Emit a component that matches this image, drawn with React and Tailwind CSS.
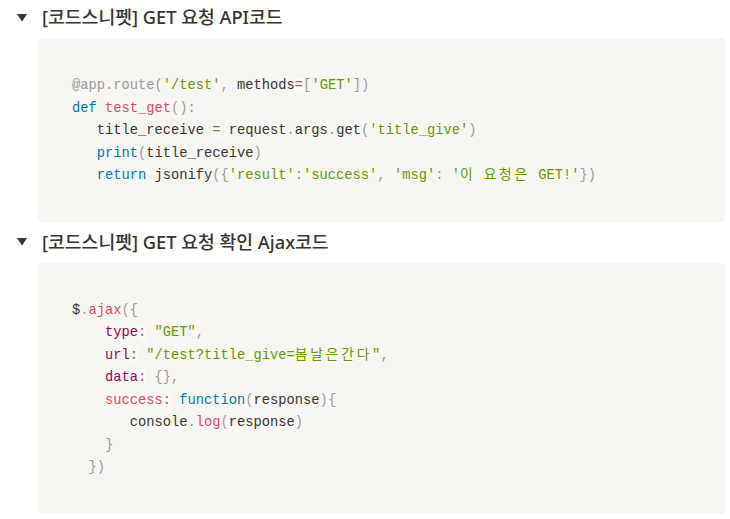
import React from "react";

const C = {
  p: "text-[#999]",
  s: "text-[#669900]",
  k: "text-[#0077aa]",
  f: "text-[#DD4A68]",
  o: "text-[#9a6e3a] bg-[rgba(255,255,255,0.5)]",
  pr: "text-[#990055]",
  d: "text-[#37352f]",
};

function T({ t, children }) {
  return <span className={C[t]}>{children}</span>;
}
function K({ children }) {
  return <span className="tracking-[2.8px]">{children}</span>;
}

function Toggle({ title }) {
  return (
    <div className="flex h-[34px] items-center pl-[17px]">
      <svg width="10" height="9" viewBox="0 0 10 9" className="shrink-0">
        <polygon points="0,1 10,1 5,8.5" fill="#37352f" />
      </svg>
      <span
        className="ml-[15px] text-[18.25px] font-medium text-[#37352f]"
        style={{ fontFamily: '"Noto Sans", "Noto Sans CJK KR", sans-serif' }}
      >
        {title}
      </span>
    </div>
  );
}

function Code({ children }) {
  return (
    <div className="ml-[38px] mr-[5px] mt-[4px] rounded-[4px] bg-[#F7F6F3] pl-[34px] pt-[37px] pb-[34px]">
      <pre
        className="m-0 whitespace-pre text-[13.75px] leading-[22.5px] text-[#37352f]"
        style={{ fontFamily: '"Liberation Mono", "Noto Sans CJK KR", monospace' }}
      >
        {children}
      </pre>
    </div>
  );
}

export default function App() {
  return (
    <div className="w-[730px] h-[519px] bg-white overflow-hidden">
      <Toggle title="[코드스니펫] GET 요청 API코드" />
      <Code>
        <T t="p">@app</T><T t="p">.route</T><T t="p">(</T><T t="s">'/test'</T><T t="p">,</T> methods<T t="o">=</T><T t="p">[</T><T t="s">'GET'</T><T t="p">])</T>
        {"\n"}
        <T t="k">def</T> <T t="f">test_get</T><T t="p">():</T>
        {"\n   "}
        title_receive <T t="o">=</T> request<T t="p">.</T>args<T t="p">.</T>get<T t="p">(</T><T t="s">'title_give'</T><T t="p">)</T>
        {"\n   "}
        <T t="k">print</T><T t="p">(</T>title_receive<T t="p">)</T>
        {"\n   "}
        <T t="k">return</T> jsonify<T t="p">{"({"}</T><T t="s">'result'</T><T t="p">:</T><T t="s">'success'</T><T t="p">,</T> <T t="s">'msg'</T><T t="p">:</T> <T t="s">'<K>이</K> <K>요청은</K> GET!'</T><T t="p">{"})"}</T>
      </Code>
      <div className="h-[3px]" />
      <Toggle title="[코드스니펫] GET 요청 확인 Ajax코드" />
      <Code>
        $<T t="p">.</T><T t="f">ajax</T><T t="p">{"({"}</T>
        {"\n    "}
        <T t="pr">type</T><T t="o">:</T> <T t="s">"GET"</T><T t="p">,</T>
        {"\n    "}
        <T t="pr">url</T><T t="o">:</T> <T t="s">"/test?title_give=<K>봄날은간다</K>"</T><T t="p">,</T>
        {"\n    "}
        <T t="pr">data</T><T t="o">:</T> <T t="p">{"{}"}</T><T t="p">,</T>
        {"\n    "}
        <T t="f">success</T><T t="o">:</T> <T t="k">function</T><T t="p">(</T>response<T t="p">)</T><T t="p">{"{"}</T>
        {"\n       "}
        console<T t="p">.</T><T t="f">log</T><T t="p">(</T>response<T t="p">)</T>
        {"\n    "}
        <T t="p">{"}"}</T>
        {"\n  "}
        <T t="p">{"})"}</T>
      </Code>
    </div>
  );
}
